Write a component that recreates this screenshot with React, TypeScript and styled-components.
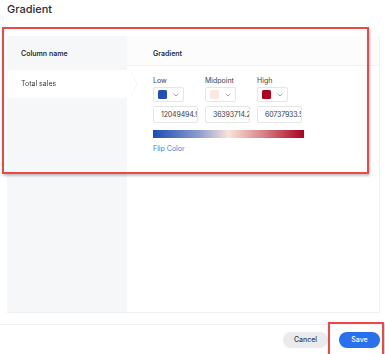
import React from "react";
import styled, { createGlobalStyle } from "styled-components";

const GlobalStyle = createGlobalStyle`
  html, body {
    margin: 0;
    padding: 0;
    background: #ffffff;
  }
  body {
    font-family: Inter, "Noto Sans", "Liberation Sans", sans-serif;
    color: #2b2d31;
  }
`;

interface Stop {
  label: string;
  color: string;
  value: string;
}

const stops: Stop[] = [
  { label: "Low", color: "#1f4fb8", value: "12049494.9" },
  { label: "Midpoint", color: "#fbe8e2", value: "36393714.2" },
  { label: "High", color: "#b0001f", value: "60737933.5" },
];

const Chevron = () => (
  <svg width="6" height="4" viewBox="0 0 6 4" fill="none">
    <path d="M1 1 L3 3 L5 1" stroke="#7a7e85" strokeWidth="0.7" strokeLinecap="round" strokeLinejoin="round" />
  </svg>
);

const App = () => {
  return (
    <>
      <GlobalStyle />
      <StyledPage>
        <StyledTitle>Gradient</StyledTitle>
        <StyledPanel>
          <StyledColumnList>
            <StyledListHeader>Column name</StyledListHeader>
            <StyledTabOutline>
              <StyledTab>Total sales</StyledTab>
            </StyledTabOutline>
          </StyledColumnList>
          <StyledEditor>
            <StyledEditorHeader>Gradient</StyledEditorHeader>
            <StyledEditorBody>
              <StyledStops>
                {stops.map((stop) => (
                  <StyledStop key={stop.label}>
                    <StyledLabel>{stop.label}</StyledLabel>
                    <StyledColorPicker>
                      <StyledSwatch color={stop.color} />
                      <Chevron />
                    </StyledColorPicker>
                    <StyledValue>{stop.value}</StyledValue>
                  </StyledStop>
                ))}
              </StyledStops>
              <StyledBar />
              <StyledLink>Flip Color</StyledLink>
            </StyledEditorBody>
          </StyledEditor>
        </StyledPanel>
        <StyledFooter>
          <StyledButton>Cancel</StyledButton>
          <StyledButton primary>Save</StyledButton>
        </StyledFooter>
        <StyledHighlight top={27} left={2} width={367} height={147} />
        <StyledHighlight top={322} left={328} width={56} height={40} />
      </StyledPage>
    </>
  );
};

export default App;

const StyledPage = styled.div`
  position: relative;
  width: 385px;
  height: 354px;
  overflow: hidden;
`;

const StyledTitle = styled.div`
  height: 36px;
  box-sizing: border-box;
  padding: 2px 0 0 7px;
  font-size: 11px;
  line-height: 14px;
  font-weight: 500;
  color: #2b2d31;
`;

const StyledPanel = styled.div`
  display: grid;
  grid-template-columns: 120px 1fr;
  height: 277px;
  margin: 0 5px 0 7px;
  border-right: 1px solid #f1f2f4;
  border-bottom: 1px solid #eef0f2;
  box-sizing: border-box;
`;

const StyledColumnList = styled.div`
  display: flex;
  flex-direction: column;
  background: #f6f7f9;
  position: relative;
  z-index: 1;
`;

const StyledListHeader = styled.div`
  height: 30px;
  box-sizing: border-box;
  padding: 13px 0 0 14px;
  font-size: 7px;
  line-height: 9px;
  font-weight: 600;
  color: #2b2d31;
`;

const StyledTabOutline = styled.div`
  margin-top: 4px;
  filter: drop-shadow(0 0 0.6px rgba(0, 0, 0, 0.18));
`;

const StyledTab = styled.div`
  width: 130px;
  height: 28px;
  box-sizing: border-box;
  padding: 9px 0 0 14px;
  font-size: 7px;
  line-height: 9px;
  color: #3a3d42;
  background: #ffffff;
  clip-path: polygon(0 0, 123px 0, 130px 50%, 123px 100%, 0 100%);
`;

const StyledEditor = styled.div`
  display: flex;
  flex-direction: column;
  background: #ffffff;
`;

const StyledEditorHeader = styled.div`
  height: 30px;
  box-sizing: border-box;
  padding: 13px 0 0 26px;
  font-size: 7px;
  line-height: 9px;
  font-weight: 600;
  color: #2b2d31;
  background: #fcfcfd;
  border-bottom: 1px solid #f0f1f3;
`;

const StyledEditorBody = styled.div`
  display: flex;
  flex-direction: column;
  padding: 10px 0 0 26px;
`;

const StyledStops = styled.div`
  display: flex;
  gap: 7px;
`;

const StyledStop = styled.div`
  display: flex;
  flex-direction: column;
  width: 45px;
`;

const StyledLabel = styled.div`
  font-size: 7px;
  line-height: 10px;
  color: #3f4247;
  margin-bottom: 1px;
`;

const StyledColorPicker = styled.div`
  display: flex;
  align-items: center;
  gap: 6px;
  width: 31px;
  height: 15px;
  box-sizing: border-box;
  padding-left: 4px;
  border: 1px solid #e4e6e9;
  border-radius: 2px;
  background: #ffffff;
`;

const StyledSwatch = styled.span<{ color: string }>`
  display: block;
  width: 9px;
  height: 9px;
  border-radius: 1.5px;
  background: ${(props) => props.color};
`;

const StyledValue = styled.div`
  margin-top: 4px;
  height: 17px;
  box-sizing: border-box;
  padding: 0 0 0 7px;
  border: 1px solid #e4e6e9;
  border-radius: 2px;
  font-size: 7px;
  line-height: 15px;
  letter-spacing: -0.15px;
  color: #3a3d42;
  white-space: nowrap;
  overflow: hidden;
`;

const StyledBar = styled.div`
  margin-top: 7px;
  width: 151px;
  height: 8px;
  background: linear-gradient(to right, #1b4db3 0%, #8a9bcc 30%, #f9e3da 50%, #d27a80 75%, #ad0021 100%);
`;

const StyledLink = styled.div`
  margin-top: 6px;
  font-size: 7px;
  line-height: 10px;
  color: #3f7fe3;
`;

const StyledFooter = styled.div`
  display: flex;
  justify-content: flex-end;
  gap: 11px;
  margin-top: 11px;
  padding: 7px 5px 0 0;
  border-top: 1px solid #f0f1f3;
`;

const StyledButton = styled.button<{ primary?: boolean }>`
  width: ${(props) => (props.primary ? "41px" : "45px")};
  height: 16px;
  padding: 0;
  border: none;
  border-radius: 8px;
  font-family: inherit;
  font-size: 7px;
  line-height: 16px;
  font-weight: 500;
  color: ${(props) => (props.primary ? "#ffffff" : "#3a3d42")};
  background: ${(props) => (props.primary ? "#2a6fee" : "#e9ebef")};
`;

const StyledHighlight = styled.div<{ top: number; left: number; width: number; height: number }>`
  position: absolute;
  top: ${(props) => props.top}px;
  left: ${(props) => props.left}px;
  width: ${(props) => props.width}px;
  height: ${(props) => props.height}px;
  box-sizing: border-box;
  border: 2px solid #ee4747;
  box-shadow: 1px 2px 2px rgba(0, 0, 0, 0.22);
  pointer-events: none;
  z-index: 5;
`;
